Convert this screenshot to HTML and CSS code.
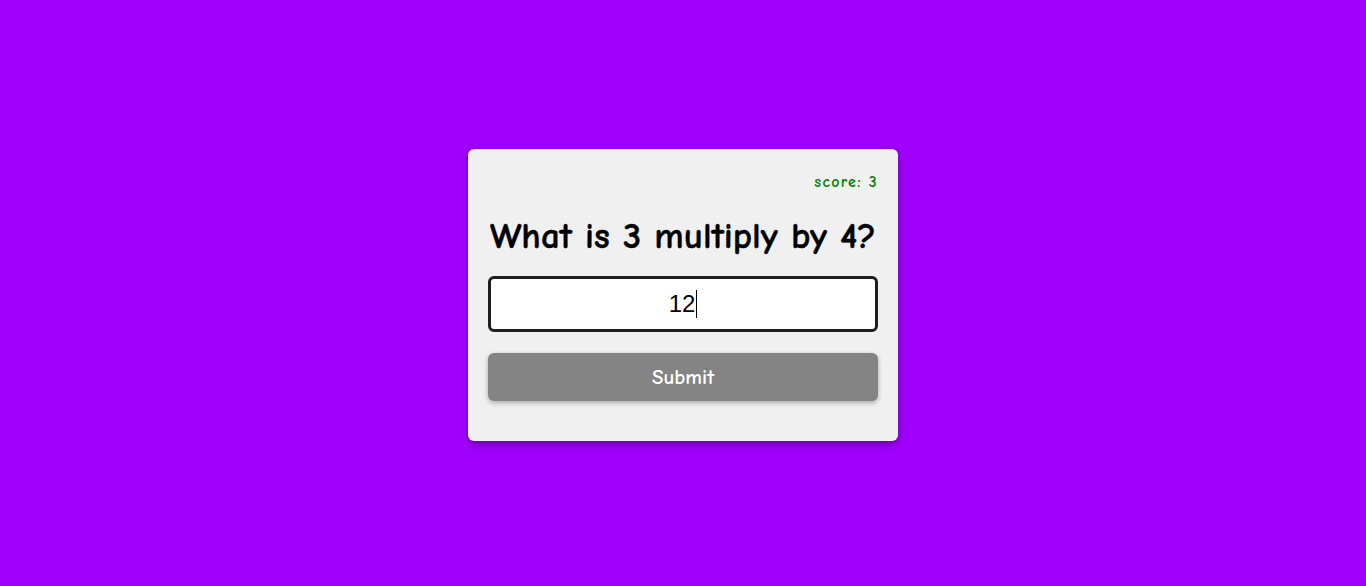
FILE: index.html
```html
<!DOCTYPE html>
<html>
<head>
<meta charset="utf-8">
<link rel="stylesheet" href="styles.css">
</head>
<body>
<main class="page">
  <section class="card">
    <p class="score">score: 3</p>
    <h1 class="question">What is 3 multiply by 4?</h1>
    <div class="answer"><span class="answer-text">12</span><span class="caret"></span></div>
    <button class="submit">Submit</button>
  </section>
</main>
</body>
</html>
```
FILE: styles.css
```css
html, body {
  margin: 0;
  padding: 0;
}
body {
  background: #a100fe;
  font-family: "Comic Sans MS", "Comic Neue", "DejaVu Sans", sans-serif;
}
.page {
  box-sizing: border-box;
  min-height: 100vh;
  padding-top: 4px;
  display: flex;
  align-items: center;
  justify-content: center;
}
.card {
  width: 390px;
  padding: 20px 20px 40px;
  background: #f0f0f0;
  border-radius: 6px;
  box-shadow: 0 3px 8px rgba(0, 0, 0, 0.35);
  display: flex;
  flex-direction: column;
}
.score {
  margin: 0;
  text-align: right;
  color: #008000;
  font-weight: bold;
  font-size: 16px;
  letter-spacing: 1.3px;
  line-height: 26px;
}
.question {
  margin: 16px 0 15px;
  text-align: center;
  font-size: 37px;
  line-height: 50px;
  font-weight: bold;
  color: #000;
  -webkit-text-stroke: 0.4px #000;
}
.answer {
  box-sizing: border-box;
  height: 56px;
  border: 3px solid #1e1e1e;
  border-radius: 6px;
  background: #fff;
  display: flex;
  align-items: center;
  justify-content: center;
  font-family: "Liberation Sans", Arial, sans-serif;
  font-size: 24px;
  color: #000;
}
.caret {
  display: inline-block;
  width: 1px;
  height: 28px;
  background: #000;
  margin-left: 1px;
}
.submit {
  margin-top: 21px;
  height: 48px;
  border: none;
  border-radius: 6px;
  background: #848484;
  color: #fff;
  font-family: "Comic Sans MS", "Comic Neue", "DejaVu Sans", sans-serif;
  font-size: 21px;
  font-weight: bold;
  box-shadow: 0 2px 5px rgba(0, 0, 0, 0.3);
}
```
